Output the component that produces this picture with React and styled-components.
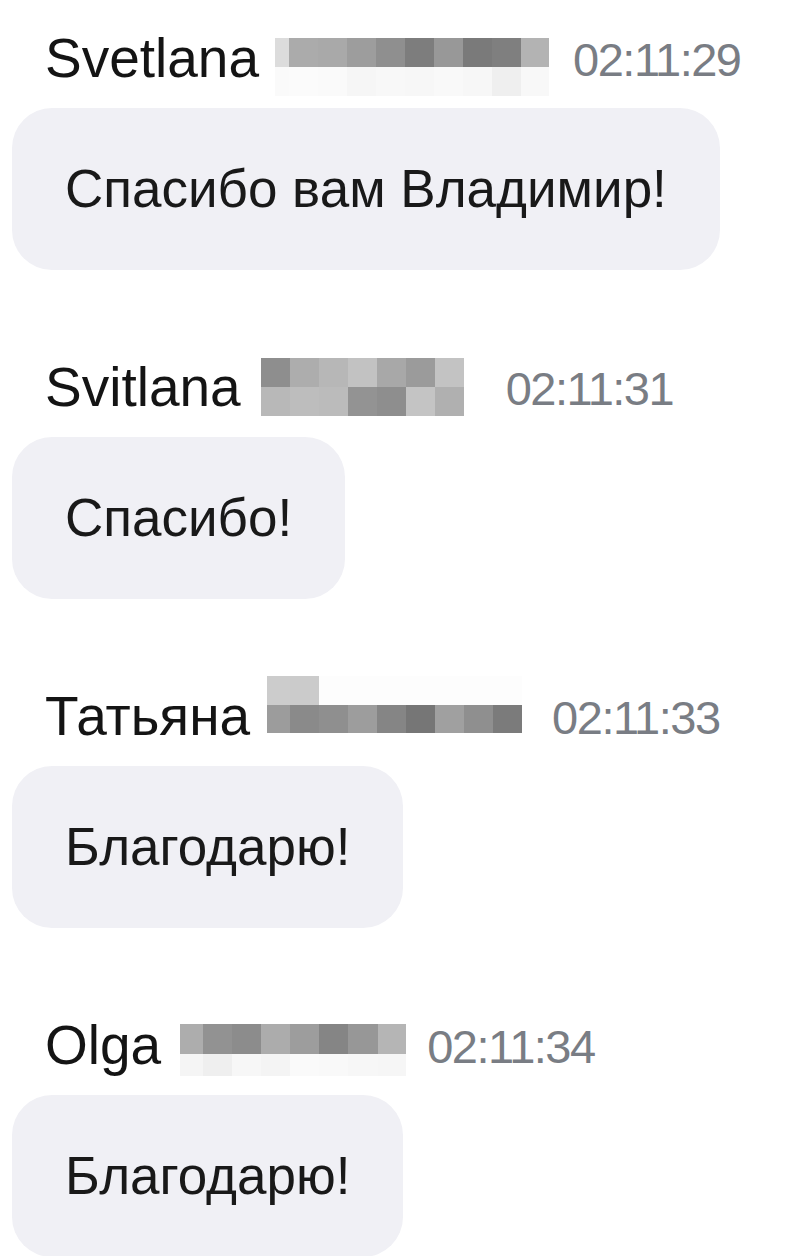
import React from 'react';
import styled, { createGlobalStyle } from 'styled-components';

const GlobalStyle = createGlobalStyle`
  html, body {
    margin: 0;
    padding: 0;
    background: #ffffff;
  }
  body {
    font-family: "Liberation Sans", Arial, "Noto Sans", sans-serif;
    -webkit-font-smoothing: antialiased;
  }
`;

const Feed = styled.div`
  display: flex;
  flex-direction: column;
  padding: 28px 0 0 12px;
  width: 804px;
  height: 1256px;
  box-sizing: border-box;
  overflow: hidden;
`;

const Message = styled.section`
  display: flex;
  flex-direction: column;
  align-items: flex-start;
  margin-bottom: 87px;
`;

const Header = styled.div`
  display: flex;
  align-items: flex-start;
  height: 60px;
  padding-left: 33px;
  white-space: nowrap;
`;

const Name = styled.span`
  font-size: 55px;
  line-height: 60px;
  color: #141414;
`;

const Time = styled.span`
  margin-left: ${(p) => p.$gap}px;
  font-size: 47px;
  line-height: 64px;
  letter-spacing: -1.5px;
  color: #797d84;
`;

// redacted surname, drawn as the mosaic of grey cells seen in the screenshot
const Mosaic = styled.div`
  display: grid;
  grid-template-columns: ${(p) => p.$cols.map((w) => `${w}px`).join(' ')};
  grid-template-rows: ${(p) => p.$rows.map((h) => `${h}px`).join(' ')};
  margin-top: ${(p) => p.$top}px;
  margin-left: ${(p) => p.$gap}px;
`;

const Cell = styled.span`
  background: ${(p) => p.$tone};
`;

const Bubble = styled.div`
  margin-top: 20px;
  padding: 51px 53px;
  border-radius: 40px;
  background: #f0f0f5;
  font-size: 53px;
  line-height: 60px;
  color: #191919;
  white-space: nowrap;
`;

const messages = [
  {
    id: 1,
    name: 'Svetlana',
    time: '02:11:29',
    text: 'Спасибо вам Владимир!',
    mosaic: {
      top: 10,
      gap: 16,
      timeGap: 24,
      cols: [14, 29, 29, 29, 29, 29, 29, 29, 29, 28],
      rows: [29, 29],
      tones: [
        ['#dcdcdc', '#ababab', '#a9a9a9', '#9d9d9d', '#8f8f8f', '#7d7d7d', '#989898', '#7a7a7a', '#7f7f7f', '#b3b3b3'],
        ['#fafafa', '#fbfbfb', '#fafafa', '#f6f6f6', '#f8f8f8', '#f7f7f7', '#f9f9f9', '#f7f7f7', '#efefef', '#f8f8f8'],
      ],
    },
  },
  {
    id: 2,
    name: 'Svitlana',
    time: '02:11:31',
    text: 'Спасибо!',
    mosaic: {
      top: 1,
      gap: 20,
      timeGap: 42,
      cols: [29, 29, 29, 29, 29, 29, 29],
      rows: [29, 29],
      tones: [
        ['#8e8e8e', '#adadad', '#b7b7b7', '#c2c2c2', '#a8a8a8', '#9b9b9b', '#c3c3c3'],
        ['#b8b8b8', '#bdbdbd', '#bbbbbb', '#939393', '#8e8e8e', '#c4c4c4', '#b0b0b0'],
      ],
    },
  },
  {
    id: 3,
    name: 'Татьяна',
    time: '02:11:33',
    text: 'Благодарю!',
    mosaic: {
      top: -10,
      gap: 17,
      timeGap: 30,
      cols: [23, 29, 29, 29, 29, 29, 29, 29, 29],
      rows: [29, 28],
      tones: [
        ['#cccccc', '#cbcbcb', '#fdfdfd', '#fdfdfd', '#fdfdfd', '#fdfdfd', '#fdfdfd', '#fdfdfd', '#fdfdfd'],
        ['#9c9c9c', '#8a8a8a', '#8f8f8f', '#9d9d9d', '#858585', '#767676', '#a0a0a0', '#8f8f8f', '#7b7b7b'],
      ],
    },
  },
  {
    id: 4,
    name: 'Olga',
    time: '02:11:34',
    text: 'Благодарю!',
    mosaic: {
      top: 9,
      gap: 19,
      timeGap: 21,
      cols: [23, 29, 29, 29, 29, 29, 30, 28],
      rows: [30, 22],
      tones: [
        ['#adadad', '#929292', '#8c8c8c', '#acacac', '#9d9d9d', '#858585', '#979797', '#b5b5b5'],
        ['#f5f5f5', '#efefef', '#f7f7f7', '#f4f4f4', '#fafafa', '#f9f9f9', '#f7f7f7', '#f6f6f6'],
      ],
    },
  },
];

const App = () => (
  <>
    <GlobalStyle />
    <Feed>
      {messages.map(({
        id, name, time, text, mosaic,
      }) => (
        <Message key={id}>
          <Header>
            <Name>{name}</Name>
            <Mosaic $cols={mosaic.cols} $rows={mosaic.rows} $top={mosaic.top} $gap={mosaic.gap}>
              {mosaic.tones.flatMap((row, r) => row.map((tone, c) => (
                // eslint-disable-next-line react/no-array-index-key
                <Cell key={`${r}-${c}`} $tone={tone} />
              )))}
            </Mosaic>
            <Time $gap={mosaic.timeGap}>{time}</Time>
          </Header>
          <Bubble>{text}</Bubble>
        </Message>
      ))}
    </Feed>
  </>
);

export default App;
